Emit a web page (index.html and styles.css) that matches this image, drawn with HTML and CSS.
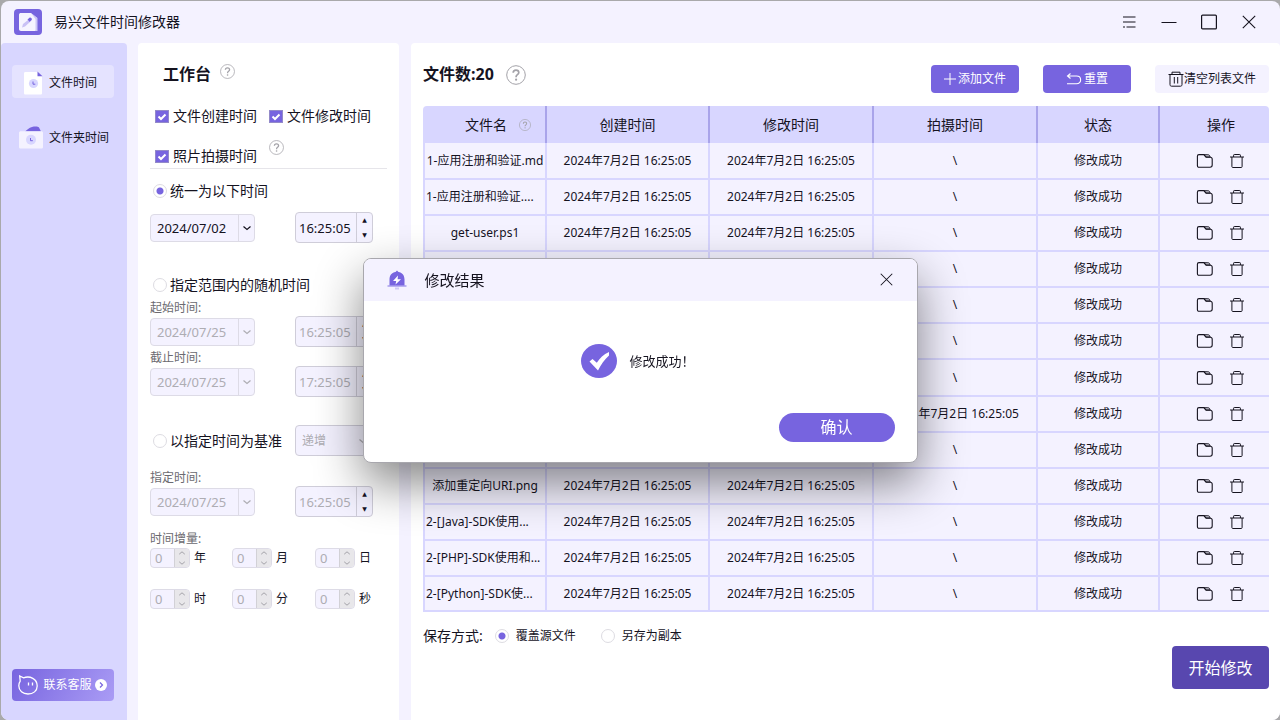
FILE: index.html
```html
<!DOCTYPE html>
<html lang="zh-CN">
<head>
<meta charset="utf-8">
<meta name="viewport" content="width=device-width, initial-scale=1">
<title>易兴文件时间修改器</title>
<link rel="stylesheet" href="styles.css">
</head>
<body>
<svg class="sprite" aria-hidden="true">
  <symbol id="help" viewBox="0 0 20 20"><circle cx="10" cy="10" r="9.3" fill="none" stroke="currentColor"/><path d="M7.2 7.8C7.2 6 8.4 5.1 10 5.1s2.8 1 2.8 2.5c0 2-2.7 2.2-2.7 4.2v.4" fill="none" stroke="currentColor" stroke-width="1.7"/><circle cx="10.1" cy="14.7" r="1.1" fill="currentColor"/></symbol>
  <symbol id="down" viewBox="0 0 10 10"><path d="M1.5 3.5 5 6.5l3.5-3" fill="none" stroke="currentColor" stroke-width="1.2"/></symbol>
  <symbol id="up" viewBox="0 0 10 10"><path d="M1.5 6.5 5 3.5l3.5 3" fill="none" stroke="currentColor" stroke-width="1.2"/></symbol>
  <symbol id="close" viewBox="0 0 14 14"><path d="M.8.8l12.4 12.4M13.2.8.8 13.2" fill="none" stroke="currentColor" stroke-width="1.1"/></symbol>
  <symbol id="folder" viewBox="0 0 18 16"><path d="M3 1.6h4.800l2.200 2.600h4.200c1.400 0 2 .8 2 2v5.800c0 1.400-.8 2.200-2.200 2.200H3c-1 0-1.600-.6-1.600-1.600V3.200c0-1 .6-1.600 1.600-1.600z" fill="none" stroke="currentColor" stroke-width="1.1"/><path d="M8 1.600h3.800c1.200 0 2 .8 2.400 2.400H10z" fill="currentColor" fill-opacity=".3" stroke="currentColor" stroke-width=".8"/></symbol>
  <symbol id="trash" viewBox="0 0 16 16"><path d="M1 4h14M4.600 4V2.200c0-.5.300-.7.700-.7h5.400c.4 0 .7.200.7.700V4M2.900 4v9.600c0 .5.300.9.900.9h8.400c.6 0 .9-.4.900-.9V4" fill="none" stroke="currentColor"/></symbol>
</svg>

<div class="window">
  <header class="titlebar">
    <svg class="logo" viewBox="0 0 28 28" aria-hidden="true"><rect width="28" height="26" rx="4" y="1" fill="#7764df"/><path d="M5 7c0-1.500.8-2 2-2h10l6 5v11c0 1-.6 2-2 2H7c-1.200 0-2-.7-2-2z" fill="#f6f4ff"/><path d="M17 5l6.500 5v13h-2V11z" fill="#cdc6f6"/><path d="M8 19.500l1-3.500 5-4 2 2-5 4.500z" fill="#c9c1f5"/><path d="M13.500 11.500l2-1.800c1-.7 3 1 2.200 2.200l-2 2z" fill="#7764df"/></svg>
    <h1 class="app-name">易兴文件时间修改器</h1>
    <div class="win-buttons">
      <button type="button" aria-label="菜单"><svg viewBox="0 0 14 14" width="14" height="14"><path d="M1 2h12.500M1 7h12.500M1 12h2m1.500 0h9" stroke="currentColor" fill="none" stroke-width="1.200"/></svg></button>
      <button type="button" aria-label="最小化"><svg viewBox="0 0 16 16" width="16" height="16"><path d="M.5 8.500h15" stroke="currentColor" stroke-width="1.200"/></svg></button>
      <button type="button" aria-label="最大化"><svg viewBox="0 0 16 16" width="16" height="16"><rect x=".6" y="1.100" width="14.800" height="13.800" rx="1" fill="none" stroke="currentColor" stroke-width="1.200"/></svg></button>
      <button type="button" aria-label="关闭"><svg width="14" height="14"><use href="#close"/></svg></button>
    </div>
  </header>

  <div class="columns">
    <nav class="sidebar">
      <button type="button" class="nav-item active">
        <svg class="nav-icon" viewBox="0 0 24 24"><path d="M6.500 1H19l4 4.500V22c0 1-.5 1.500-1.500 1.500h-15C5.500 23.500 5 23 5 22V2.500C5 1.500 5.500 1 6.500 1z" fill="#fff"/><path d="M18.500.500L23.500 5.300h-5z" fill="#7764df"/><circle cx="14.500" cy="12.500" r="4.600" fill="#d8d6ff"/><path d="M14 10.500v2.700h2.300" fill="none" stroke="#7764df"/></svg>
        文件时间
      </button>
      <button type="button" class="nav-item">
        <svg class="nav-icon" viewBox="0 0 24 24"><path d="M6 5.500C8 4 10 1.500 13 .900c3-.6 6-.6 7 .6l2 4z" fill="#7764df"/><path d="M2 5.200h20c1.200 0 2 .5 2 1.500v14.300c0 1-.7 1.600-1.700 1.600H1.700C.7 22.600 0 22 0 21V6.700c0-1 .8-1.500 2-1.500z" fill="#f4f2ff"/><circle cx="12" cy="13.800" r="5" fill="#d8d6ff"/><path d="M11.500 12v2.700h2.300" fill="none" stroke="#7764df"/></svg>
        文件夹时间
      </button>
      <button type="button" class="contact">
        <svg viewBox="0 0 20 20" width="20" height="20"><path d="M2.200 6.200L1.700 1l3.800 1.800C12 .5 19.200 3.800 19.200 11c0 5-4 8-9.200 8S.8 15.600.8 10.800c0-1.800.5-3.300 1.400-4.600z" fill="none" stroke="#fff" stroke-width="1.300"/><path d="M10.500 7.500v3M14.500 7.500v3" stroke="#fff" stroke-width="1.300"/></svg>
        <span>联系客服</span>
        <svg viewBox="0 0 12 12" width="12" height="12"><circle cx="6" cy="6" r="6" fill="#fff"/><path d="M5 3.500L7.500 6 5 8.500" fill="none" stroke="#7764df" stroke-width="1.200"/></svg>
      </button>
    </nav>

    <section class="panel workbench">
      <div class="wb-head"><h2>工作台</h2><svg class="help-m"><use href="#help"/></svg></div>
      <div class="line checks">
        <label class="check"><input type="checkbox" checked>文件创建时间</label>
        <label class="check"><input type="checkbox" checked>文件修改时间</label>
      </div>
      <div class="line checks photo">
        <label class="check"><input type="checkbox" checked>照片拍摄时间</label>
        <svg class="help-m"><use href="#help"/></svg>
      </div>

      <div class="line mode first"><label class="radio"><input type="radio" name="mode" checked>统一为以下时间</label></div>
      <div class="fields first">
        <div class="date"><input type="text" value="2024/07/02" aria-label="日期"><button type="button" aria-label="选择日期"><svg><use href="#down"/></svg></button></div>
        <div class="time"><input type="text" value="16:25:05" aria-label="时间"><div class="steps"><button type="button">▲</button><button type="button">▼</button></div></div>
      </div>

      <div class="line mode second"><label class="radio"><input type="radio" name="mode">指定范围内的随机时间</label></div>
      <label class="caption" for="d1">起始时间:</label>
      <div class="fields off">
        <div class="date"><input id="d1" type="text" value="2024/07/25" disabled><button type="button" disabled aria-label="选择日期"><svg><use href="#down"/></svg></button></div>
        <div class="time"><input type="text" value="16:25:05" aria-label="时间" disabled><div class="steps"><button type="button">▲</button><button type="button">▼</button></div></div>
      </div>
      <label class="caption" for="d2">截止时间:</label>
      <div class="fields off">
        <div class="date"><input id="d2" type="text" value="2024/07/25" disabled><button type="button" disabled aria-label="选择日期"><svg><use href="#down"/></svg></button></div>
        <div class="time"><input type="text" value="17:25:05" aria-label="时间" disabled><div class="steps"><button type="button">▲</button><button type="button">▼</button></div></div>
      </div>

      <div class="fields base">
        <label class="radio"><input type="radio" name="mode">以指定时间为基准</label>
        <div class="choice"><select disabled aria-label="方向"><option>递增</option></select><svg><use href="#down"/></svg></div>
      </div>
      <label class="caption wide" for="d3">指定时间:</label>
      <div class="fields off">
        <div class="date"><input id="d3" type="text" value="2024/07/25" disabled><button type="button" disabled aria-label="选择日期"><svg><use href="#down"/></svg></button></div>
        <div class="time"><input type="text" value="16:25:05" aria-label="时间" disabled><div class="steps"><button type="button">▲</button><button type="button">▼</button></div></div>
      </div>
      <p class="caption wide">时间增量:</p>
      <div class="spins">
        <label><span class="spin"><input type="text" value="0" disabled><i><svg><use href="#up"/></svg><svg><use href="#down"/></svg></i></span>年</label>
        <label><span class="spin"><input type="text" value="0" disabled><i><svg><use href="#up"/></svg><svg><use href="#down"/></svg></i></span>月</label>
        <label><span class="spin"><input type="text" value="0" disabled><i><svg><use href="#up"/></svg><svg><use href="#down"/></svg></i></span>日</label>
        <label><span class="spin"><input type="text" value="0" disabled><i><svg><use href="#up"/></svg><svg><use href="#down"/></svg></i></span>时</label>
        <label><span class="spin"><input type="text" value="0" disabled><i><svg><use href="#up"/></svg><svg><use href="#down"/></svg></i></span>分</label>
        <label><span class="spin"><input type="text" value="0" disabled><i><svg><use href="#up"/></svg><svg><use href="#down"/></svg></i></span>秒</label>
      </div>
    </section>

    <main class="panel files">
      <div class="toolbar">
        <h2>文件数:20</h2><svg class="help-l"><use href="#help"/></svg>
        <div class="actions">
          <button type="button" class="btn solid"><svg viewBox="0 0 12 12" width="12" height="12"><path d="M6 0v12M0 6h12" stroke="currentColor"/></svg>添加文件</button>
          <button type="button" class="btn solid"><svg viewBox="0 0 16 12" width="16" height="12"><path d="M4.500.500L1.500 3l3 2.500M1.500 3h9c5.500 0 5.500 7.800 0 7.800H1" fill="none" stroke="currentColor" stroke-width="1.100"/></svg>重置</button>
          <button type="button" class="btn light"><svg viewBox="0 0 16 16" width="16" height="16"><path d="M.5 3.500h15M4 3.500V1.200h8v2.300M2 3.500v10c0 1 .5 1.700 1.500 1.700h9c1 0 1.500-.7 1.500-1.700v-10M6.300 6v6.500M9.700 6v6.500" fill="none" stroke="currentColor"/></svg>清空列表文件</button>
        </div>
      </div>

      <table class="grid">
        <colgroup><col class="c-name"><col class="c-made"><col class="c-date"><col class="c-date"><col class="c-state"><col class="c-ops"></colgroup>
        <thead>
          <tr><th><span class="name-head">文件名<svg class="help-s"><use href="#help"/></svg></span></th><th>创建时间</th><th>修改时间</th><th>拍摄时间</th><th>状态</th><th class="ops">操作</th></tr>
        </thead>
        <tbody>
          <tr><td>1-应用注册和验证.md</td><td>2024年7月2日 16:25:05</td><td>2024年7月2日 16:25:05</td><td>\</td><td>修改成功</td><td class="ops"><button type="button" aria-label="打开"><svg class="fo"><use href="#folder"/></svg></button><button type="button" aria-label="删除"><svg class="tr"><use href="#trash"/></svg></button></td></tr>
          <tr><td class="cut">1-应用注册和验证....</td><td>2024年7月2日 16:25:05</td><td>2024年7月2日 16:25:05</td><td>\</td><td>修改成功</td><td class="ops"><button type="button" aria-label="打开"><svg class="fo"><use href="#folder"/></svg></button><button type="button" aria-label="删除"><svg class="tr"><use href="#trash"/></svg></button></td></tr>
          <tr><td>get-user.ps1</td><td>2024年7月2日 16:25:05</td><td>2024年7月2日 16:25:05</td><td>\</td><td>修改成功</td><td class="ops"><button type="button" aria-label="打开"><svg class="fo"><use href="#folder"/></svg></button><button type="button" aria-label="删除"><svg class="tr"><use href="#trash"/></svg></button></td></tr>
          <tr><td></td><td></td><td></td><td>\</td><td>修改成功</td><td class="ops"><button type="button" aria-label="打开"><svg class="fo"><use href="#folder"/></svg></button><button type="button" aria-label="删除"><svg class="tr"><use href="#trash"/></svg></button></td></tr>
          <tr><td></td><td></td><td></td><td>\</td><td>修改成功</td><td class="ops"><button type="button" aria-label="打开"><svg class="fo"><use href="#folder"/></svg></button><button type="button" aria-label="删除"><svg class="tr"><use href="#trash"/></svg></button></td></tr>
          <tr><td></td><td></td><td></td><td>\</td><td>修改成功</td><td class="ops"><button type="button" aria-label="打开"><svg class="fo"><use href="#folder"/></svg></button><button type="button" aria-label="删除"><svg class="tr"><use href="#trash"/></svg></button></td></tr>
          <tr><td></td><td></td><td></td><td>\</td><td>修改成功</td><td class="ops"><button type="button" aria-label="打开"><svg class="fo"><use href="#folder"/></svg></button><button type="button" aria-label="删除"><svg class="tr"><use href="#trash"/></svg></button></td></tr>
          <tr><td></td><td></td><td></td><td>2024年7月2日 16:25:05</td><td>修改成功</td><td class="ops"><button type="button" aria-label="打开"><svg class="fo"><use href="#folder"/></svg></button><button type="button" aria-label="删除"><svg class="tr"><use href="#trash"/></svg></button></td></tr>
          <tr><td></td><td></td><td></td><td>\</td><td>修改成功</td><td class="ops"><button type="button" aria-label="打开"><svg class="fo"><use href="#folder"/></svg></button><button type="button" aria-label="删除"><svg class="tr"><use href="#trash"/></svg></button></td></tr>
          <tr><td>添加重定向URI.png</td><td>2024年7月2日 16:25:05</td><td>2024年7月2日 16:25:05</td><td>\</td><td>修改成功</td><td class="ops"><button type="button" aria-label="打开"><svg class="fo"><use href="#folder"/></svg></button><button type="button" aria-label="删除"><svg class="tr"><use href="#trash"/></svg></button></td></tr>
          <tr><td class="cut">2-[Java]-SDK使用...</td><td>2024年7月2日 16:25:05</td><td>2024年7月2日 16:25:05</td><td>\</td><td>修改成功</td><td class="ops"><button type="button" aria-label="打开"><svg class="fo"><use href="#folder"/></svg></button><button type="button" aria-label="删除"><svg class="tr"><use href="#trash"/></svg></button></td></tr>
          <tr><td class="cut">2-[PHP]-SDK使用和...</td><td>2024年7月2日 16:25:05</td><td>2024年7月2日 16:25:05</td><td>\</td><td>修改成功</td><td class="ops"><button type="button" aria-label="打开"><svg class="fo"><use href="#folder"/></svg></button><button type="button" aria-label="删除"><svg class="tr"><use href="#trash"/></svg></button></td></tr>
          <tr><td class="cut">2-[Python]-SDK使...</td><td>2024年7月2日 16:25:05</td><td>2024年7月2日 16:25:05</td><td>\</td><td>修改成功</td><td class="ops"><button type="button" aria-label="打开"><svg class="fo"><use href="#folder"/></svg></button><button type="button" aria-label="删除"><svg class="tr"><use href="#trash"/></svg></button></td></tr>
        </tbody>
      </table>

      <div class="bottom">
        <div class="save">
          <span class="save-title">保存方式:</span>
          <label class="radio small"><input type="radio" name="save" checked>覆盖源文件</label>
          <label class="radio small"><input type="radio" name="save">另存为副本</label>
        </div>
        <button type="button" class="start">开始修改</button>
      </div>
    </main>
  </div>
</div>

<div class="overlay">
  <div class="dialog" role="dialog" aria-modal="true" aria-labelledby="dlg-title">
    <div class="dlg-head">
      <svg class="bell" viewBox="0 0 20 20"><path d="M2.500 16V9.500C2.500 5 5 2.500 8.500 2L10 .500 11.500 2C15 2.500 17.500 5 17.500 9.500V16z" fill="#7764df"/><path d="M.5 16h19" stroke="#a79ced" stroke-width="1.500"/><path d="M8 18.500h4" stroke="#cfc9f7" stroke-width="2"/><path d="M11 5.500L6 11h3.200L8.500 14.500 14 9.300h-3.400z" fill="#fff"/></svg>
      <h2 id="dlg-title">修改结果</h2>
      <button type="button" class="dlg-close" aria-label="关闭"><svg width="13" height="13"><use href="#close"/></svg></button>
    </div>
    <div class="dlg-body">
      <svg viewBox="0 0 36 34" width="36" height="34"><ellipse cx="18" cy="17" rx="18" ry="17" fill="#7764df"/><path d="M8.500 17.500l3-2.500 4.300 3.800C18.800 14 22.500 10.500 28 8v3.500c-4.500 4-8 9-11 15z" fill="#fff"/></svg>
      <p>修改成功！</p>
    </div>
    <div class="dlg-foot"><button type="button" class="ok">确认</button></div>
  </div>
</div>
</body>
</html>
```
FILE: styles.css
```css
* { box-sizing: border-box; }

:root {
  --accent: #7764df;
  --lilac: #d8d6ff;
  --pale: #f4f2ff;
  --ink: #15131f;
  --edge: #dddbe6;
}

body {
  margin: 0;
  min-height: 100vh;
  display: flex;
  background: #a9a9ab;
  color: var(--ink);
  font: 14px/20px "Noto Sans", "Noto Sans CJK SC", sans-serif;
}

h1, h2, p { margin: 0; }
button, input, select { font: inherit; color: inherit; }
button { border: 0; padding: 0; background: none; cursor: pointer; }
svg { display: block; flex: none; }
.sprite { position: absolute; width: 0; height: 0; }

.window {
  flex: 1;
  min-width: 0;
  display: flex;
  flex-direction: column;
  margin: 1px 0 0 1px;
  border-radius: 8px;
  overflow: hidden;
  background: var(--pale);
}

.titlebar { display: flex; align-items: center; height: 42px; padding: 0 11px 0 13px; }
.logo { width: 28px; height: 28px; }
.app-name { margin-left: 12px; font-size: 14px; font-weight: 400; }
.win-buttons { display: flex; margin-left: auto; }
.win-buttons button { display: grid; place-items: center; width: 40px; height: 40px; }

.columns { flex: 1; display: flex; }

.sidebar {
  width: 126px;
  flex: none;
  display: flex;
  flex-direction: column;
  gap: 22px;
  padding: 22px 13px 19px 11px;
  border-radius: 4px 4px 0 0;
  background: var(--lilac);
}
.nav-item {
  display: flex;
  align-items: center;
  gap: 6px;
  height: 33px;
  padding: 2px 0 0 7px;
  border-radius: 4px;
  font-size: 12px;
  white-space: nowrap;
}
.nav-item.active { background: #e5e3ff; }
.nav-icon { width: 24px; height: 24px; }
.contact {
  display: flex;
  align-items: center;
  justify-content: space-between;
  height: 32px;
  margin-top: auto;
  padding: 0 7px 0 6px;
  border-radius: 4px;
  background: linear-gradient(120deg, #7764df, #aa9cf5);
  color: #fff;
  font-size: 12px;
}
.contact span { margin-left: 2px; }

.panel { background: #fff; border-radius: 4px 4px 0 0; }
.workbench { width: 261px; flex: none; margin: 0 12px 0 11px; padding: 18px 12px 0; }
.files { flex: 1; min-width: 0; display: flex; flex-direction: column; padding: 22px 11px 0 12px; }

.help-s { width: 12px; height: 12px; }
.help-m { width: 15px; height: 15px; }
.help-l { width: 20px; height: 20px; }
.help-s, .help-m, .help-l { color: #a3a2a8; }

/* Workbench */
.wb-head { display: flex; gap: 9px; height: 26px; padding-left: 13px; margin-bottom: 17px; }
.wb-head h2, .toolbar h2 { font-size: 16px; line-height: 26px; font-weight: 700; }
.wb-head .help-m { margin-top: 3px; }
.line { display: flex; align-items: center; height: 24px; }
.checks { gap: 12px; padding-left: 5px; }
.check, .radio { display: flex; align-items: center; white-space: nowrap; }
.check { gap: 4px; }
.photo { height: 25px; margin-top: 16px; border-bottom: 1px solid #e6e5ea; }
.photo .help-m { align-self: flex-start; margin-top: -4px; }

input[type="checkbox"] {
  appearance: none;
  width: 14px;
  height: 13px;
  margin: 0;
  border: 1px solid #938ac9;
  background: var(--accent) url("data:image/svg+xml,%3Csvg xmlns='http://www.w3.org/2000/svg' viewBox='0 0 12 11'%3E%3Cpath d='M2.500 5.500l2.500 2.500 4.500-4.500' fill='none' stroke='%23fff' stroke-width='2'/%3E%3C/svg%3E") center / contain no-repeat;
}
input[type="radio"] {
  appearance: none;
  width: 14px;
  height: 14px;
  margin: 0;
  border: 1px solid #dddce2;
  border-radius: 50%;
  background: #fff;
}
input[type="radio"]:checked { background: radial-gradient(circle, var(--accent) 3px, #fff 4px); }
.radio { gap: 3px; padding-left: 3px; }

.mode.first { margin-top: 10px; }
.mode.second { margin-top: 30px; }
.caption { display: block; margin-top: 3px; color: #6b6a70; font-size: 12px; line-height: 16px; }
.caption.wide { margin-top: 14px; }

.fields { display: flex; align-items: center; justify-content: space-between; height: 31px; padding-right: 14px; }
.fields.first { margin-top: 9px; }
.fields.base { margin-top: 28px; }
.date, .time, .choice {
  display: flex;
  border: 1px solid var(--edge);
  border-radius: 4px;
  background: var(--pale);
  font-size: 13px;
}
.date { width: 105px; height: 28px; }
.time, .choice { width: 78px; height: 31px; border-color: #cfcdd9; }
.date input, .time input { flex: 1; width: 0; min-width: 0; border: 0; padding: 0; background: none; }
.date input { padding-left: 6px; }
.time input { padding-left: 3px; }
.date button { display: grid; place-items: center; width: 16px; border-left: 1px solid var(--edge); }
.date svg { width: 10px; height: 10px; }
.steps { display: flex; flex-direction: column; width: 16px; border-left: 1px solid #cfcdd9; }
.steps button { flex: 1; font: 6px/12px "DejaVu Sans", sans-serif; }
.off input, .off .date button, .choice { color: #aeadb3; }
.choice { position: relative; }
.choice select { appearance: none; width: 100%; border: 0; padding: 0 6px; background: none; color: inherit; font-size: 12px; opacity: 1; }
.choice svg { position: absolute; right: 4px; top: 10px; width: 10px; height: 10px; }

.spins { display: grid; grid-template-columns: 82px 83px auto; row-gap: 21px; margin-top: 1px; font-size: 12px; }
.spins label { display: flex; align-items: center; gap: 4px; height: 20px; }
.spin { display: flex; width: 40px; height: 20px; border: 1px solid var(--edge); border-radius: 4px; background: var(--pale); overflow: hidden; }
.spin input { flex: 1; width: 0; min-width: 0; border: 0; padding: 0 0 0 4px; background: none; color: #aeadb3; font-size: 13px; }
.spin i { display: flex; flex-direction: column; justify-content: space-between; align-items: center; width: 15px; border-left: 1px solid #d2d1d6; background: #e8e7ea; color: #a09fa5; }
.spin svg { width: 8px; height: 8px; }

/* File list */
.toolbar { display: flex; align-items: center; gap: 12px; height: 28px; margin-bottom: 13px; }
.toolbar h2, .toolbar .help-l { align-self: flex-start; }
.toolbar h2 { line-height: 18px; }
.actions { display: flex; gap: 24px; margin-left: auto; }
.btn { display: flex; align-items: center; justify-content: center; height: 28px; border-radius: 4px; font-size: 12px; white-space: nowrap; }
.btn.solid { width: 88px; gap: 2px; background: var(--accent); color: #fff; }
.btn.light { width: 114px; background: var(--pale); }

.grid { width: 100%; table-layout: fixed; border-collapse: separate; border-spacing: 0; font-size: 12px; line-height: 18px; }
.c-name { width: 124px; }
.c-made { width: 163px; }
.c-date { width: 164px; }
.c-state { width: 122px; }
.c-ops { width: 109px; }
.grid th { height: 37px; padding: 0; border-right: 2px solid #a9a4ea; background: var(--lilac); font-size: 14px; font-weight: 400; }
.grid th:first-child { border-top-left-radius: 4px; }
.grid th:last-child { border-right: 0; border-top-right-radius: 4px; }
.name-head { display: flex; align-items: center; justify-content: center; gap: 12px; padding-left: 28px; }
.grid td { height: 36px; padding: 0; border-right: 2px solid var(--lilac); border-bottom: 2px solid var(--lilac); background: var(--pale); text-align: center; white-space: nowrap; }
.grid tr:nth-child(6n+1) td { height: 37px; }
.grid tr:last-child td { height: 35px; }
.grid td:first-child { border-left: 2px solid var(--lilac); }
.grid td:last-child { border-right: 0; }
.grid td.cut { padding-left: 1px; text-align: left; }
.grid .ops { padding-left: 13px; }
.grid .ops button { display: inline-grid; place-items: center; width: 32px; height: 20px; vertical-align: middle; }
.fo { width: 18px; height: 16px; }
.tr { width: 16px; height: 16px; }

.bottom { display: flex; align-items: flex-start; justify-content: space-between; padding-bottom: 31px; margin-top: auto; }
.save { display: flex; align-items: center; height: 20px; margin-top: -20px; }
.save-title { margin-right: 9px; }
.radio.small { gap: 7px; margin-right: 22px; font-size: 12px; }
.start { width: 97px; height: 43px; border-radius: 4px; background: #5847af; color: #fff; font-size: 16px; }

/* Result dialog */
.overlay { position: fixed; inset: 0; display: grid; place-items: center; }
.dialog {
  width: 555px;
  max-width: 100%;
  border: 1px solid #a8a7ad;
  border-radius: 8px;
  overflow: hidden;
  background: #fff;
  box-shadow: 0 20px 48px rgba(0, 0, 0, .48);
}
.dlg-head { display: flex; align-items: center; height: 42px; padding: 0 16px 0 23px; background: var(--pale); }
.bell { width: 20px; height: 20px; }
.dlg-head h2 { margin-left: 18px; font-size: 15px; font-weight: 400; }
.dlg-close { display: grid; place-items: center; width: 28px; height: 28px; margin-left: auto; }
.dlg-body { display: flex; align-items: center; justify-content: center; gap: 12px; height: 121px; padding-right: 4px; font-size: 13px; }
.dlg-foot { display: flex; justify-content: flex-end; align-items: flex-start; height: 40px; margin: -9px 0 9px; padding-right: 22px; }
.ok { width: 116px; height: 29px; border-radius: 15px; background: var(--accent); color: #fff; font-size: 16px; line-height: 29px; }
```
